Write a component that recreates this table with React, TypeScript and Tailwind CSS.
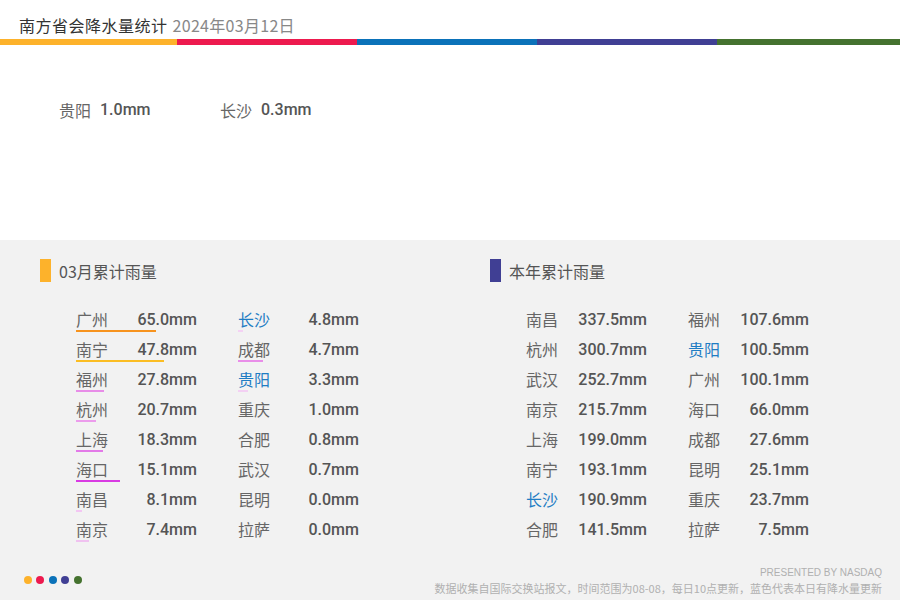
const colors = ['#fdb22b', '#ed1a4e', '#0b72b9', '#403f94', '#45722f'];

type Item = { city: string; value: string; blue?: boolean; bar?: number; barColor?: string };

const monthLeft: Item[] = [
  { city: '广州', value: '65.0mm', bar: 80, barColor: '#f7931e' },
  { city: '南宁', value: '47.8mm', bar: 88, barColor: '#fbbd23' },
  { city: '福州', value: '27.8mm', bar: 28, barColor: '#e88de8' },
  { city: '杭州', value: '20.7mm', bar: 20, barColor: '#ec9cec' },
  { city: '上海', value: '18.3mm', bar: 27, barColor: '#e37ae8' },
  { city: '海口', value: '15.1mm', bar: 44, barColor: '#d93be3' },
  { city: '南昌', value: '8.1mm', bar: 6, barColor: '#f3c6f3' },
  { city: '南京', value: '7.4mm', bar: 13, barColor: '#f0c2f0' },
];

const monthRight: Item[] = [
  { city: '长沙', value: '4.8mm', blue: true, bar: 5, barColor: '#f4d2f4' },
  { city: '成都', value: '4.7mm', bar: 25, barColor: '#e98ee9' },
  { city: '贵阳', value: '3.3mm', blue: true, bar: 10, barColor: '#f3d0f3' },
  { city: '重庆', value: '1.0mm' },
  { city: '合肥', value: '0.8mm' },
  { city: '武汉', value: '0.7mm' },
  { city: '昆明', value: '0.0mm' },
  { city: '拉萨', value: '0.0mm' },
];

const yearLeft: Item[] = [
  { city: '南昌', value: '337.5mm' },
  { city: '杭州', value: '300.7mm' },
  { city: '武汉', value: '252.7mm' },
  { city: '南京', value: '215.7mm' },
  { city: '上海', value: '199.0mm' },
  { city: '南宁', value: '193.1mm' },
  { city: '长沙', value: '190.9mm', blue: true },
  { city: '合肥', value: '141.5mm' },
];

const yearRight: Item[] = [
  { city: '福州', value: '107.6mm' },
  { city: '贵阳', value: '100.5mm', blue: true },
  { city: '广州', value: '100.1mm' },
  { city: '海口', value: '66.0mm' },
  { city: '成都', value: '27.6mm' },
  { city: '昆明', value: '25.1mm' },
  { city: '重庆', value: '23.7mm' },
  { city: '拉萨', value: '7.5mm' },
];

const cjk = "font-['Noto_Sans_CJK_SC',sans-serif]";
const num = "font-['Roboto','Liberation_Sans',sans-serif]";

function Cell({ item }: { item: Item }) {
  return (
    <div className="flex h-[30px] items-center">
      <div className="flex w-[50px] flex-col pt-[1px]">
        <span className={`${cjk} text-[16px] leading-[20px] ${item.blue ? 'text-[#1f7dc4]' : 'text-[#666]'}`}>
          {item.city}
        </span>
        <div className="mt-[1px] h-[2px]" style={{ width: item.bar ?? 0, backgroundColor: item.barColor }} />
      </div>
      <span className={`${num} w-[71px] text-right text-[16px] font-medium leading-[20px] text-[#555]`}>
        {item.value}
      </span>
    </div>
  );
}

function Section({ title, color, left, right }: { title: string; color: string; left: Item[]; right: Item[] }) {
  return (
    <div className="flex flex-col pt-[19px]">
      <div className="flex h-[23px] items-center gap-[8px] pl-[40px]">
        <div className="h-[23px] w-[11px]" style={{ backgroundColor: color }} />
        <span className={`${cjk} text-[16px] leading-[20px] text-[#555]`}>{title}</span>
      </div>
      <div className="mt-[23px] flex gap-[41px] pl-[76px]">
        <div className="flex flex-col">
          {left.map((it) => (
            <Cell key={it.city} item={it} />
          ))}
        </div>
        <div className="flex flex-col">
          {right.map((it) => (
            <Cell key={it.city} item={it} />
          ))}
        </div>
      </div>
    </div>
  );
}

export default function App() {
  return (
    <div className="flex h-[600px] w-[900px] flex-col overflow-hidden bg-white">
      <div className="flex h-[240px] flex-col">
        <div className="flex h-[39px] items-start gap-[5px] pl-[19px] pt-[15px]">
          <span className={`${cjk} text-[16px] leading-[20px] tracking-[0.5px] text-[#333]`}>南方省会降水量统计</span>
          <span className={`${cjk} text-[16px] leading-[20px] tracking-[0.3px] text-[#888]`}>2024年03月12日</span>
        </div>
        <div className="flex h-[6px]">
          <div className="h-full w-[177px] bg-[#fdb22b]" />
          <div className="h-full w-[180px] bg-[#ed1a4e]" />
          <div className="h-full w-[180px] bg-[#0b72b9]" />
          <div className="h-full w-[180px] bg-[#403f94]" />
          <div className="h-full flex-1 bg-[#45722f]" />
        </div>
        <div className="mt-[55px] flex items-center pl-[59px]">
          <div className="flex w-[161px] items-center gap-[9px]">
            <span className={`${cjk} text-[16px] leading-[20px] text-[#666]`}>贵阳</span>
            <span className={`${num} text-[16px] font-medium leading-[20px] text-[#555]`}>1.0mm</span>
          </div>
          <div className="flex items-center gap-[9px]">
            <span className={`${cjk} text-[16px] leading-[20px] text-[#666]`}>长沙</span>
            <span className={`${num} text-[16px] font-medium leading-[20px] text-[#555]`}>0.3mm</span>
          </div>
        </div>
      </div>
      <div className="flex h-[360px] flex-col bg-[#f2f2f2]">
        <div className="grid grid-cols-2">
          <Section title="03月累计雨量" color="#fdb22b" left={monthLeft} right={monthRight} />
          <Section title="本年累计雨量" color="#403f94" left={yearLeft} right={yearRight} />
        </div>
        <div className="mt-auto flex items-center justify-between pb-[4px] pl-[24px] pr-[18px]">
          <div className="mb-[4px] flex gap-[4.4px]">
            {colors.map((c) => (
              <div key={c} className="h-[8px] w-[8px] rounded-full" style={{ backgroundColor: c }} />
            ))}
          </div>
          <div className="flex flex-col items-end text-[#b0b0b0]">
            <span className="font-['Liberation_Sans',sans-serif] text-[10px] leading-[12px]">PRESENTED BY NASDAQ</span>
            <span className={`${cjk} mt-[1px] text-[11px] leading-[16px]`}>
              数据收集自国际交换站报文，时间范围为08-08，每日10点更新，蓝色代表本日有降水量更新
            </span>
          </div>
        </div>
      </div>
    </div>
  );
}
